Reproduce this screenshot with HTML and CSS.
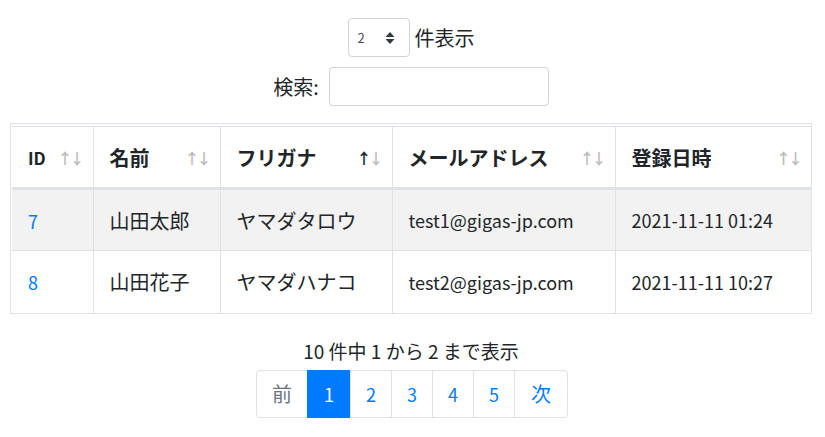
FILE: index.html
```html
<!DOCTYPE html>
<html lang="ja">
<head>
    <meta charset="UTF-8">
    <title>ユーザー一覧</title>
    <link rel="stylesheet" href="styles.css">
</head>
<body>
    <div class="controls">
        <div class="length">
            <div class="select-box">
                <span>2</span>
                <svg class="caret" width="10" height="14" viewBox="0 0 10 14">
                    <path d="M5 1 L9.5 6 H0.5 Z M5 13 L9.5 8 H0.5 Z" fill="#343a40"/>
                </svg>
            </div>
            <span>件表示</span>
        </div>
        <div class="filter">
            <label>検索:</label>
            <input type="search" class="search-input">
        </div>
    </div>

    <div class="table-wrap">
        <table class="data-table">
            <colgroup>
                <col style="width: 81px">
                <col style="width: 127px">
                <col style="width: 172px">
                <col style="width: 223px">
                <col>
            </colgroup>
            <thead>
                <tr>
                    <th class="id-col">ID<span class="sort"><b>↑</b><b>↓</b></span></th>
                    <th>名前<span class="sort"><b>↑</b><b>↓</b></span></th>
                    <th>フリガナ<span class="sort asc"><b>↑</b><b>↓</b></span></th>
                    <th>メールアドレス<span class="sort"><b>↑</b><b>↓</b></span></th>
                    <th>登録日時<span class="sort"><b>↑</b><b>↓</b></span></th>
                </tr>
            </thead>
            <tbody>
                <tr class="odd">
                    <td><a href="#" class="id-link">7</a></td>
                    <td>山田太郎</td>
                    <td>ヤマダタロウ</td>
                    <td class="small">test1@gigas-jp.com</td>
                    <td class="small">2021-11-11 01:24</td>
                </tr>
                <tr>
                    <td><a href="#" class="id-link">8</a></td>
                    <td>山田花子</td>
                    <td>ヤマダハナコ</td>
                    <td class="small">test2@gigas-jp.com</td>
                    <td class="small">2021-11-11 10:27</td>
                </tr>
            </tbody>
        </table>
    </div>

    <div class="info">10 件中 1 から 2 まで表示</div>
    <ul class="pagination">
        <li class="page disabled">前</li>
        <li class="page active">1</li>
        <li class="page">2</li>
        <li class="page">3</li>
        <li class="page">4</li>
        <li class="page">5</li>
        <li class="page next">次</li>
    </ul>
</body>
</html>
```

FILE: styles.css
```css
* {
    margin: 0;
    padding: 0;
    box-sizing: border-box;
}

body {
    font-family: "Noto Sans CJK JP", "Noto Sans", sans-serif;
    color: #212529;
    background-color: #fff;
    padding: 18px 13px 0 10px;
    font-size: 20px;
}

.controls {
    display: flex;
    flex-direction: column;
    align-items: center;
    gap: 10px;
}

.length {
    display: flex;
    align-items: center;
    gap: 5px;
    line-height: 1.5;
}

.select-box {
    width: 62px;
    height: 39px;
    border: 1px solid #ced4da;
    border-radius: 4px;
    display: flex;
    align-items: center;
    justify-content: space-between;
    padding: 0 14px 0 9px;
    font-size: 13px;
    color: #495057;
}

.filter {
    display: flex;
    align-items: center;
    gap: 10px;
}

.search-input {
    width: 220px;
    height: 39px;
    border: 1px solid #ced4da;
    border-radius: 4px;
}

.table-wrap {
    margin-top: 17px;
    border: 1px solid #dee2e6;
    padding: 2px 0 0 1px;
}

.data-table {
    width: 100%;
    border-collapse: collapse;
    table-layout: fixed;
}

.data-table th {
    position: relative;
    height: 62px;
    text-align: left;
    font-weight: bold;
    font-size: 20px;
    padding: 0 16px;
    border-top: 1px solid #dee2e6;
    border-bottom: 3px solid #dee2e6;
    border-left: 1px solid #dee2e6;
}

.data-table th:first-child,
.data-table td:first-child {
    border-left: none;
}

.data-table th.id-col {
    font-size: 17px;
}

.sort {
    position: absolute;
    right: 11px;
    top: 50%;
    transform: translateY(-50%);
    font-size: 15px;
    color: #bdbdbd;
    display: flex;
    letter-spacing: -3px;
}

.sort b {
    font-weight: bold;
}

.sort.asc b:first-child {
    color: #212529;
}

.data-table td {
    height: 62px;
    padding: 0 16px;
    border-left: 1px solid #dee2e6;
    border-top: 1px solid #dee2e6;
    font-size: 20px;
}

.data-table tbody tr:first-child td {
    border-top: none;
}

.data-table td.small {
    font-size: 18px;
}

.data-table tr.odd td {
    background-color: #f2f2f2;
}

.id-link {
    color: #007bff;
    text-decoration: none;
    font-size: 18px;
}

.info {
    text-align: center;
    margin-top: 24px;
    font-size: 19px;
    line-height: 26px;
}

.pagination {
    list-style: none;
    display: flex;
    justify-content: center;
    margin-top: 6px;
    padding-left: 2px;
}

.page {
    height: 48px;
    display: flex;
    align-items: center;
    justify-content: center;
    width: 42px;
    border: 1px solid #dee2e6;
    margin-left: -1px;
    color: #007bff;
    font-size: 18px;
}

.page:first-child {
    width: 52px;
    border-radius: 4px 0 0 4px;
    margin-left: 0;
}

.page.next {
    width: 54px;
    border-radius: 0 4px 4px 0;
    font-size: 20px;
}

.page.disabled {
    color: #6c757d;
    font-size: 20px;
}

.page.active {
    background-color: #007bff;
    border-color: #007bff;
    color: #fff;
    width: 44px;
}
```
